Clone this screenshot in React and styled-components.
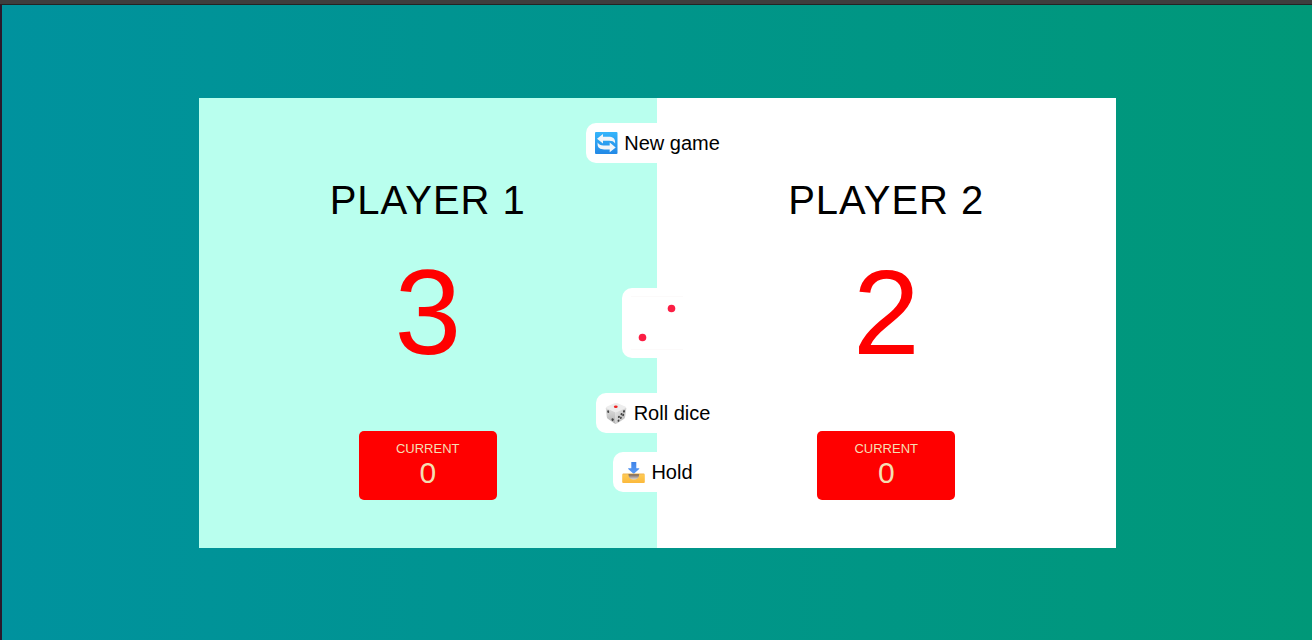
import React from 'react';
import styled, { createGlobalStyle } from 'styled-components';

const GlobalStyle = createGlobalStyle`
  *, *::before, *::after { box-sizing: border-box; }
  body {
    margin: 0;
    font-family: "Liberation Sans", Arial, sans-serif;
    color: #000;
  }
`;

const Page = styled.div`
  display: flex;
  flex-direction: column;
  min-height: 100vh;
`;

const TopEdge = styled.div`
  height: 5px;
  flex: none;
  background: #3e3e3e;
  border-bottom: 1px solid #242424;
`;

const Stage = styled.main`
  flex: 1;
  display: flex;
  align-items: center;
  justify-content: center;
  border-left: 2px solid #2a1a2b;
  background: linear-gradient(to right, #00929e, #009878) padding-box;
`;

const Board = styled.div`
  position: relative;
  display: flex;
  width: 70%;
  min-height: 450px;
`;

const Player = styled.section`
  flex: 1;
  display: flex;
  flex-direction: column;
  align-items: center;
  padding: 79px 0 48px;
  background: ${({ $active }) => ($active ? '#b9ffee' : '#fff')};
`;

const Name = styled.h2`
  margin: 0;
  font-size: 40px;
  font-weight: 400;
  line-height: 46px;
  letter-spacing: 1px;
  text-transform: uppercase;
`;

const Score = styled.p`
  margin: 29px 0 0;
  font-size: 120px;
  line-height: 120px;
  color: #f00;
`;

const Current = styled.div`
  width: 30%;
  margin-top: auto;
  padding: 10px;
  border-radius: 5px;
  background: #f00;
  color: #f5deb3;
  text-align: center;
`;

const CurrentLabel = styled.p`
  margin: 0;
  font-size: 13px;
  line-height: 15px;
  text-transform: uppercase;
`;

const CurrentScore = styled.p`
  margin: 0;
  font-size: 30px;
  line-height: 34px;
`;

const Controls = styled.div`
  position: absolute;
  inset: 0;
  display: flex;
  flex-direction: column;
  align-items: center;
  padding-top: 25px;
`;

const Button = styled.button`
  display: flex;
  align-items: center;
  gap: 6px;
  height: 40px;
  padding: 0 8px;
  border: 0;
  border-radius: 10px;
  background: #fff;
  color: #000;
  font: 20px/24px "Liberation Sans", Arial, sans-serif;
  white-space: nowrap;
  cursor: pointer;

  svg { display: block; width: 24px; height: 24px; }
`;

const DieFace = styled.div`
  width: 70px;
  height: 70px;
  margin: 125px 0 35px;
  border-radius: 10px;
  background: #fff;

  svg { display: block; width: 100%; height: 100%; }
`;

const Actions = styled.div`
  display: flex;
  flex-direction: column;
  align-items: center;
  gap: 19px;
`;

const RefreshIcon = () => (
  <svg viewBox="0 0 24 24" aria-hidden="true">
    <defs>
      <linearGradient id="refreshBlue" x1="0" y1="0" x2="0" y2="1">
        <stop offset="0" stopColor="#35b5fb" />
        <stop offset="1" stopColor="#2389e6" />
      </linearGradient>
    </defs>
    <rect x="1" y="1" width="22.5" height="22" rx="1" fill="url(#refreshBlue)" />
    <path d="M3 7.8 9 3v2.8h5.5c4.2 0 6.6 1.8 6.6 5.2v1.6c-1.2-2.2-3-2.8-6-2.8H9v2.8z" fill="#f1f5f9" />
    <path d="M21.7 16.4 15.7 21.2v-2.8h-5.5c-4.2 0-6.6-1.8-6.6-5.2v-1.6c1.2 2.2 3 2.8 6 2.8h6.1v-2.8z" fill="#f1f5f9" />
  </svg>
);

const DiceIcon = () => (
  <svg viewBox="0 0 24 24" aria-hidden="true">
    <defs>
      <linearGradient id="diceLeft" x1="0" y1="0" x2="0" y2="1">
        <stop offset="0" stopColor="#dedede" />
        <stop offset="1" stopColor="#b2b2b2" />
      </linearGradient>
      <linearGradient id="diceRight" x1="0" y1="0" x2="1" y2="1">
        <stop offset="0" stopColor="#e8e8e8" />
        <stop offset="1" stopColor="#b8b8b8" />
      </linearGradient>
    </defs>
    <path d="M2 6.4 11 10 12 22.7Q11.4 22.9 10.6 22.4L4.1 18Q3 17.1 2.8 15.9L1.8 7.5z" fill="url(#diceLeft)" />
    <path d="M22 6.4 11 10 11 22.6Q12.4 22.9 13.4 22.3L19.8 18Q20.9 17.1 21.1 15.9L22.3 7.5z" fill="url(#diceRight)" />
    <path d="M1.9 6.9Q2 6 3 5.5L10.4 2.2Q12 1.6 13.6 2.2L21.2 5.5Q22.1 6 22.2 6.9L13 10.9Q11.6 11.4 10.4 10.9z" fill="#ededed" />
    <ellipse cx="11.8" cy="5.8" rx="1.9" ry="1.2" fill="#ee2020" />
    <g fill="#454545">
      <ellipse cx="4.2" cy="10.6" rx="1" ry="1.4" transform="rotate(-12 4.2 10.6)" />
      <ellipse cx="8.6" cy="18.6" rx="1.1" ry="1.4" transform="rotate(-12 8.6 18.6)" />
      <ellipse cx="20" cy="10.4" rx="1" ry="1.3" transform="rotate(20 20 10.4)" />
      <ellipse cx="17.5" cy="13.1" rx="1" ry="1.2" transform="rotate(20 17.5 13.1)" />
      <ellipse cx="14.9" cy="15.9" rx="1" ry="1.2" transform="rotate(20 14.9 15.9)" />
      <ellipse cx="19.2" cy="14" rx=".9" ry="1.2" transform="rotate(20 19.2 14)" />
      <ellipse cx="16.9" cy="16.8" rx=".9" ry="1.2" transform="rotate(20 16.9 16.8)" />
      <ellipse cx="14.5" cy="19.6" rx=".9" ry="1.2" transform="rotate(20 14.5 19.6)" />
    </g>
  </svg>
);

const InboxIcon = () => (
  <svg viewBox="0 0 24 24" aria-hidden="true">
    <defs>
      <linearGradient id="trayFront" x1="0" y1="0" x2="0" y2="1">
        <stop offset="0" stopColor="#ffcb55" />
        <stop offset="1" stopColor="#fbb93c" />
      </linearGradient>
      <linearGradient id="trayBowl" x1="0" y1="0" x2="0" y2="1">
        <stop offset="0" stopColor="#75604e" />
        <stop offset=".4" stopColor="#a09086" />
        <stop offset="1" stopColor="#dedede" />
      </linearGradient>
      <linearGradient id="arrowBlue" x1="0" y1="0" x2="0" y2="1">
        <stop offset="0" stopColor="#3f83e8" />
        <stop offset="1" stopColor="#5b9cf5" />
      </linearGradient>
    </defs>
    <path d="M1.9 13.9h21.2l.7.9v7.3q0 .9-.9.9H2.1q-.9 0-.9-.9v-7.3z" fill="url(#trayFront)" />
    <path d="M1.9 13.6h21.2l.5.8H1.4z" fill="#efb450" />
    <path d="M7.4 14.3h10.8q-.3 5.3-5.4 5.3t-5.4-5.3z" fill="url(#trayBowl)" />
    <path d="M10.3 2h5v6.2h2.6q.7.2.3.8l-5 4.4q-.5.4-1 0l-5-4.4q-.4-.6.3-.8h2.8z" fill="url(#arrowBlue)" />
  </svg>
);

const players = [
  { name: 'Player 1', score: 3, current: 0, active: true },
  { name: 'Player 2', score: 2, current: 0, active: false },
];

export default function App() {
  return (
    <Page>
      <GlobalStyle />
      <TopEdge />
      <Stage>
        <Board>
          {players.map((player) => (
            <Player key={player.name} $active={player.active}>
              <Name>{player.name}</Name>
              <Score>{player.score}</Score>
              <Current>
                <CurrentLabel>Current</CurrentLabel>
                <CurrentScore>{player.current}</CurrentScore>
              </Current>
            </Player>
          ))}
          <Controls>
            <Button type="button"><RefreshIcon />New game</Button>
            <DieFace>
              <svg viewBox="0 0 70 70" role="img" aria-label="Die showing two">
                <path d="M9 8.5h52M9 61.5h52" stroke="#fcfafa" />
                <circle cx="49.5" cy="20.5" r="3.8" fill="#fb1e44" />
                <circle cx="20.5" cy="49.5" r="3.8" fill="#fb1e44" />
              </svg>
            </DieFace>
            <Actions>
              <Button type="button"><DiceIcon />Roll dice</Button>
              <Button type="button"><InboxIcon />Hold</Button>
            </Actions>
          </Controls>
        </Board>
      </Stage>
    </Page>
  );
}
